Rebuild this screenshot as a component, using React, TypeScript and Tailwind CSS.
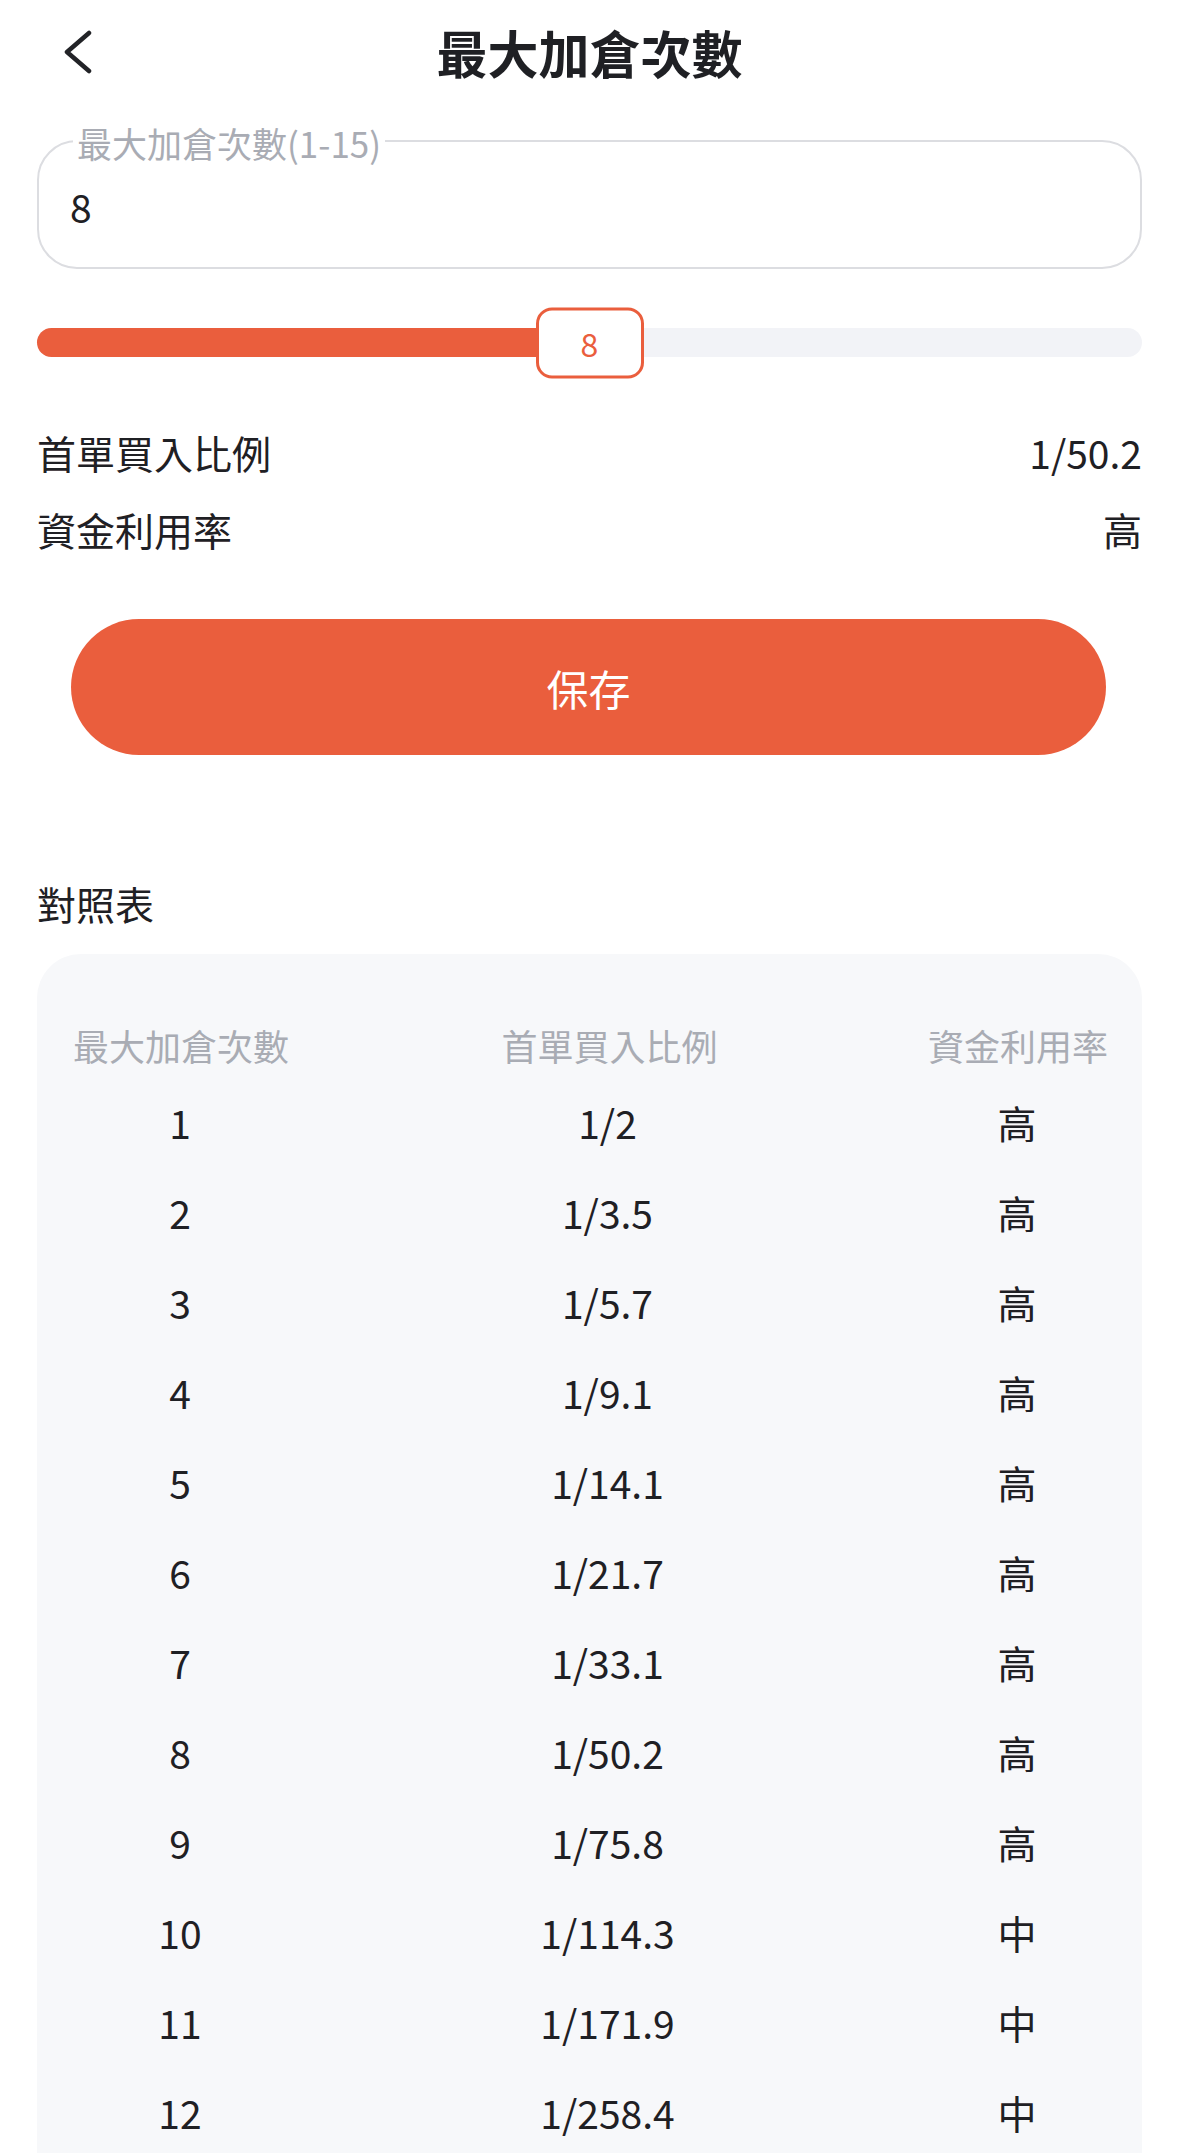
import React from "react";

const rows: [string, string, string][] = [
  ["1", "1/2", "高"],
  ["2", "1/3.5", "高"],
  ["3", "1/5.7", "高"],
  ["4", "1/9.1", "高"],
  ["5", "1/14.1", "高"],
  ["6", "1/21.7", "高"],
  ["7", "1/33.1", "高"],
  ["8", "1/50.2", "高"],
  ["9", "1/75.8", "高"],
  ["10", "1/114.3", "中"],
  ["11", "1/171.9", "中"],
  ["12", "1/258.4", "中"],
];

export default function App() {
  return (
    <div
      className="w-[1179px] h-[2153px] overflow-hidden bg-white text-[#1f2024]"
      style={{ fontFamily: '"Noto Sans CJK TC", "Noto Sans", sans-serif' }}
    >
      {/* Header */}
      <div className="h-[104px] grid grid-cols-[1fr_auto_1fr] items-center">
        <div className="pl-[64px] flex items-center">
          <svg width="32" height="48" viewBox="0 0 32 48" fill="none">
            <path
              d="M25 5 L3 24 L25 43"
              stroke="#222327"
              strokeWidth="4.5"
              strokeLinecap="round"
              strokeLinejoin="round"
            />
          </svg>
        </div>
        <div className="text-[51px] font-semibold leading-none">最大加倉次數</div>
        <div />
      </div>

      {/* Input */}
      <div className="px-[37px] mt-[36px]">
        <div className="relative h-[129px] rounded-[40px] border-[2px] border-[#dcdde1] flex items-center pl-[31px]">
          <span className="absolute left-[34px] top-0 -translate-y-1/2 bg-white px-[4px] text-[35px] leading-none text-[#a9acb4]">
            最大加倉次數(1-15)
          </span>
          <span className="text-[39px] leading-none mt-[4px]">8</span>
        </div>
      </div>

      {/* Slider */}
      <div className="px-[37px] mt-[38px]">
        <div className="h-[71px] flex items-center">
          <div className="relative w-full h-[29px] rounded-full bg-[#f2f3f7]">
            <div className="h-full w-1/2 rounded-l-full bg-[#ea5e3d]" />
            <div className="absolute left-1/2 top-1/2 -translate-x-1/2 -translate-y-1/2 w-[108px] h-[71px] rounded-[16px] border-[3px] border-[#ea5e3d] bg-white flex items-center justify-center text-[32px] leading-none text-[#ea5e3d]">
              8
            </div>
          </div>
        </div>
      </div>

      {/* Info rows */}
      <div className="px-[37px] mt-[36px] text-[39px]">
        <div className="h-[77px] flex items-center justify-between">
          <span>首單買入比例</span>
          <span>1/50.2</span>
        </div>
        <div className="h-[77px] flex items-center justify-between">
          <span>資金利用率</span>
          <span>高</span>
        </div>
      </div>

      {/* Save button */}
      <div className="pl-[71px] pr-[73px] mt-[51px]">
        <button className="w-full h-[136px] rounded-full bg-[#ea5e3d] text-white text-[42px] flex items-center justify-center">
          保存
        </button>
      </div>

      {/* Table title */}
      <div className="px-[37px] mt-[120px] h-[56px] flex items-center text-[39px]">對照表</div>

      {/* Table card */}
      <div className="px-[37px] mt-[23px]">
        <div className="rounded-[44px] bg-[#f7f8fa] px-[36px] pt-[59px] pb-[60px]">
          <div className="h-[64px] flex items-center justify-between text-[36px] text-[#a9acb4] whitespace-nowrap">
            <div className="w-[214px] text-center">最大加倉次數</div>
            <div className="w-[212px] text-center">首單買入比例</div>
            <div className="w-[178px] text-center">資金利用率</div>
          </div>
          {rows.map(([a, b, c]) => (
            <div key={a} className="h-[90px] flex items-center justify-between text-[39px] whitespace-nowrap">
              <div className="w-[214px] text-center">{a}</div>
              <div className="w-[212px] text-center">{b}</div>
              <div className="w-[178px] text-center">{c}</div>
            </div>
          ))}
        </div>
      </div>
    </div>
  );
}
